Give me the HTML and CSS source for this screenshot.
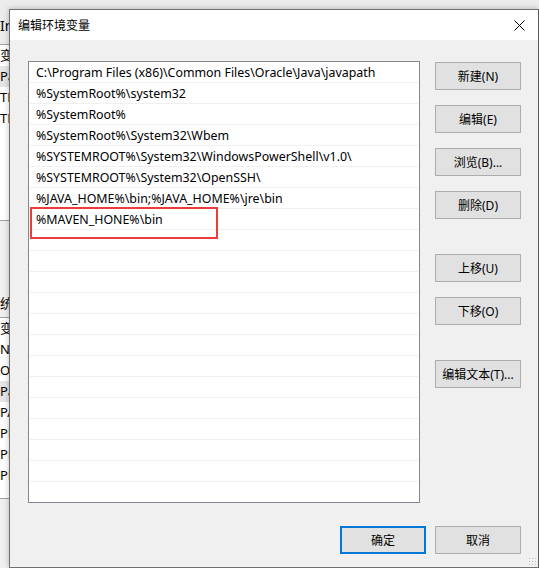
FILE: index.html
```html
<!DOCTYPE html>
<html lang="zh-CN">
<head>
<meta charset="utf-8">
<link rel="stylesheet" href="styles.css">
<title>编辑环境变量</title>
</head>
<body>
<div class="desktop">
  <div class="parent">
    <div class="p-top"><span class="p-lbl">Im</span></div>
    <div class="p-list p-list1">
      <div class="p-row p-head">变量</div>
      <div class="p-row p-sel">Path</div>
      <div class="p-row">TEMP</div>
      <div class="p-row">TMP</div>
    </div>
    <div class="p-gap"><span class="p-sys">统</span></div>
    <div class="p-list p-list2">
      <div class="p-row p-head">变量</div>
      <div class="p-row">NUMBER</div>
      <div class="p-row">OS</div>
      <div class="p-row p-sel">Path</div>
      <div class="p-row">PATHEXT</div>
      <div class="p-row">PROCESSOR</div>
      <div class="p-row">PROCESSOR</div>
      <div class="p-row">PROCESSOR</div>
    </div>
  </div>

  <div class="dialog">
    <div class="titlebar">
      <span class="title">编辑环境变量</span>
      <svg class="close" width="11" height="11" viewBox="0 0 11 11"><path d="M0.5 0.5 L10.5 10.5 M10.5 0.5 L0.5 10.5" stroke="#000" stroke-width="1" fill="none"/></svg>
    </div>
    <div class="body">
      <div class="main">
        <div class="list">
          <div class="row">C:\Program Files (x86)\Common Files\Oracle\Java\javapath</div>
          <div class="row">%SystemRoot%\system32</div>
          <div class="row">%SystemRoot%</div>
          <div class="row">%SystemRoot%\System32\Wbem</div>
          <div class="row">%SYSTEMROOT%\System32\WindowsPowerShell\v1.0\</div>
          <div class="row">%SYSTEMROOT%\System32\OpenSSH\</div>
          <div class="row">%JAVA_HOME%\bin;%JAVA_HOME%\jre\bin</div>
          <div class="row">%MAVEN_HONE%\bin</div>
          <div class="row"></div><div class="row"></div><div class="row"></div><div class="row"></div>
          <div class="row"></div><div class="row"></div><div class="row"></div><div class="row"></div>
          <div class="row"></div><div class="row"></div><div class="row"></div><div class="row"></div>
          <div class="row last"></div>
          <div class="mark"></div>
        </div>
        <div class="side">
          <button class="btn">新建(N)</button>
          <button class="btn">编辑(E)</button>
          <button class="btn">浏览(B)...</button>
          <button class="btn">删除(D)</button>
          <button class="btn sep">上移(U)</button>
          <button class="btn">下移(O)</button>
          <button class="btn sep">编辑文本(T)...</button>
        </div>
      </div>
      <div class="footer">
        <button class="btn primary">确定</button>
        <button class="btn">取消</button>
      </div>
      <div class="grip"></div>
    </div>
  </div>
</div>
</body>
</html>
```

FILE: styles.css
```css
* { box-sizing: border-box; }
html, body { margin: 0; padding: 0; }
body {
  width: 539px;
  height: 568px;
  overflow: hidden;
  background: #f0f0f0;
  font-family: "Noto Sans", "Noto Sans CJK SC", sans-serif;
  font-size: 12px;
  color: #000;
}
.desktop {
  position: relative;
  width: 539px;
  height: 568px;
}

/* parent window fragments (behind dialog) */
.parent {
  display: flex;
  flex-direction: column;
  width: 539px;
  height: 568px;
  background: #f0f0f0;
}
.p-top {
  height: 45px;
  padding: 16px 0 0 0;
  border-bottom: 1px solid #a0a0a0;
  background: #ececec;
}
.p-lbl { font-size: 14px; }
.p-list {
  background: #fff;
  display: flex;
  flex-direction: column;
}
.p-list1 { height: 176px; border-bottom: 1px solid #a0a0a0; }
.p-gap { height: 96px; padding-top: 72px; }
.p-sys { font-size: 13px; }
.p-list2 { height: 182px; border-top: 1px solid #a0a0a0; border-bottom: 1px solid #a0a0a0; }
.p-row {
  height: 21px;
  line-height: 21px;
  font-size: 13px;
  white-space: nowrap;
}
.p-sel { background: #e5e5e5; }

/* dialog */
.dialog {
  position: absolute;
  left: 9px;
  top: 9px;
  width: 530px;
  height: 559px;
  border: 1px solid #707070;
  border-right-color: #5a5a5a;
  box-shadow: 0 0 6px rgba(0,0,0,0.25);
  display: flex;
  flex-direction: column;
  background: #f0f0f0;
}
.titlebar {
  height: 30px;
  background: #fff;
  display: flex;
  align-items: center;
  justify-content: space-between;
  padding: 0 13px 0 8px;
}
.title { font-size: 12px; }
.close { display: block; }
.body {
  flex: 1;
  position: relative;
  padding: 21px 17px 0 18px;
  display: flex;
  flex-direction: column;
}
.main {
  display: flex;
  gap: 15px;
}
.list {
  position: relative;
  width: 392px;
  height: 442px;
  background: #fff;
  border: 1px solid #828790;
  padding: 0 1px;
}
.row {
  height: 21px;
  line-height: 21px;
  border-bottom: 1px solid #f0f0f0;
  padding-left: 6px;
  font-size: 12.4px;
  white-space: nowrap;
  overflow: hidden;
}
.row.last { border-bottom: none; }
.mark {
  position: absolute;
  left: 1px;
  top: 145px;
  width: 188px;
  height: 32px;
  border: 2px solid #ee3b3b;
}
.side {
  display: flex;
  flex-direction: column;
  gap: 15px;
  padding-top: 1px;
}
.btn {
  width: 86px;
  height: 28px;
  background: #e1e1e1;
  border: 1px solid #adadad;
  font-family: inherit;
  font-size: 12px;
  color: #000;
  padding: 0;
  margin: 0;
}
.btn.sep { margin-top: 20px; }
.footer {
  display: flex;
  justify-content: flex-end;
  gap: 9px;
  margin-top: 23px;
}
.btn.primary { border: 2px solid #0078d7; }
.grip {
  position: absolute;
  right: 2px;
  bottom: 2px;
  width: 8px;
  height: 8px;
  background-image: radial-gradient(circle, #bcbcbc 0.8px, transparent 1px);
  background-size: 3px 3px;
}
```
